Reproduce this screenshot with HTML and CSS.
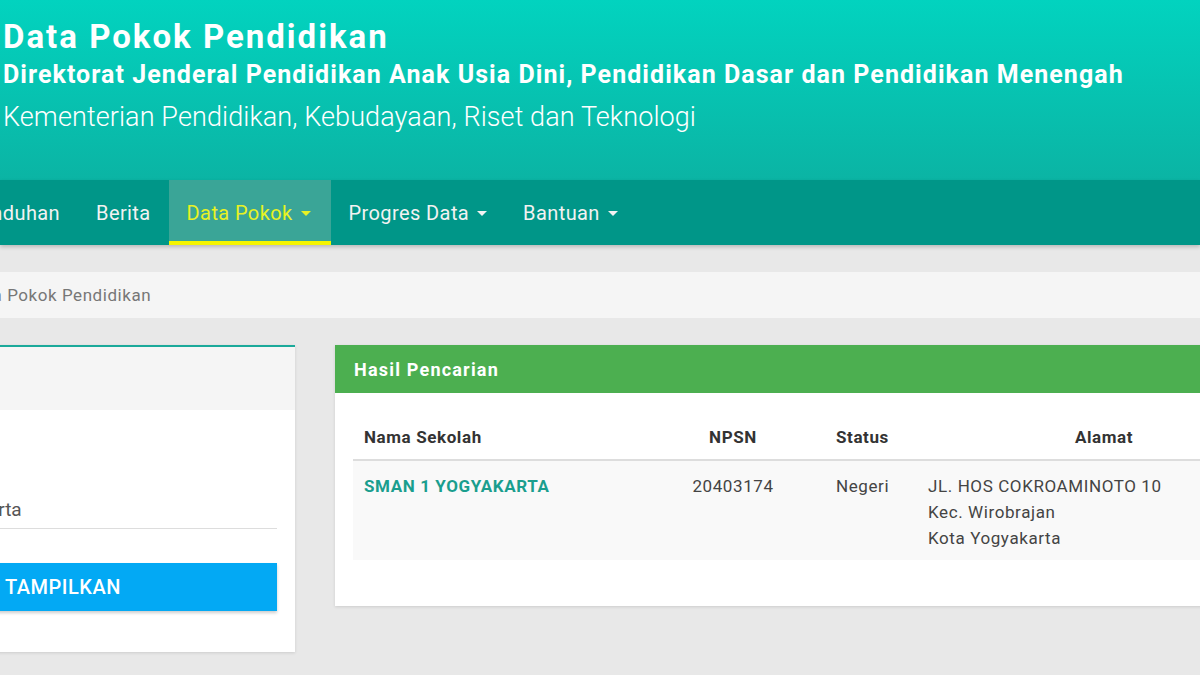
FILE: index.html
```html
<!DOCTYPE html>
<html lang="id">
<head>
    <meta charset="UTF-8">
    <meta name="viewport" content="width=device-width, initial-scale=1.0">
    <title>Data Pokok Pendidikan</title>
    <link rel="stylesheet" href="styles.css">
</head>
<body>
<header class="site-header">
    <h1>Data Pokok Pendidikan</h1>
    <div class="subtitle">Direktorat Jenderal Pendidikan Anak Usia Dini, Pendidikan Dasar dan Pendidikan Menengah</div>
    <div class="ministry">Kementerian Pendidikan, Kebudayaan, Riset dan Teknologi</div>
</header>

<nav class="main-nav">
    <ul>
        <li><a href="#">Unduhan</a></li>
        <li><a href="#">Berita</a></li>
        <li class="active"><a href="#">Data Pokok <span class="caret"></span></a></li>
        <li><a href="#">Progres Data <span class="caret"></span></a></li>
        <li><a href="#">Bantuan <span class="caret"></span></a></li>
    </ul>
</nav>

<div class="breadcrumb">
    <span>Data Pokok Pendidikan</span>
</div>

<main class="content">
    <section class="panel search-panel">
        <div class="panel-heading"></div>
        <div class="panel-body">
            <div class="form-group">
                <input type="text" value="Kota Yogyakarta">
            </div>
            <button type="button" class="btn-show">TAMPILKAN</button>
        </div>
    </section>

    <section class="panel result-panel">
        <div class="panel-heading">Hasil Pencarian</div>
        <div class="panel-body">
            <table class="result-table">
                <thead>
                    <tr>
                        <th class="col-name">Nama Sekolah</th>
                        <th class="col-npsn">NPSN</th>
                        <th class="col-status">Status</th>
                        <th class="col-address">Alamat</th>
                    </tr>
                </thead>
                <tbody>
                    <tr>
                        <td class="col-name"><a href="#">SMAN 1 YOGYAKARTA</a></td>
                        <td class="col-npsn">20403174</td>
                        <td class="col-status">Negeri</td>
                        <td class="col-address">JL. HOS COKROAMINOTO 10<br>Kec. Wirobrajan<br>Kota Yogyakarta</td>
                    </tr>
                </tbody>
            </table>
        </div>
    </section>
</main>
</body>
</html>
```
FILE: styles.css
```css
* {
    margin: 0;
    padding: 0;
    box-sizing: border-box;
}

body {
    font-family: Roboto, 'Liberation Sans', sans-serif;
    background: #e8e8e8;
    width: 1200px;
    height: 675px;
    overflow: hidden;
}

/* Шапка */
.site-header {
    height: 180px;
    background: linear-gradient(180deg, #02d3bf 0%, #0bb4a4 100%);
    color: white;
    padding: 17px 0 0 3px;
    white-space: nowrap;
}

.site-header h1 {
    font-size: 33px;
    font-weight: 700;
    line-height: 40px;
    letter-spacing: 2px;
}

.subtitle {
    font-size: 25px;
    font-weight: 700;
    line-height: 35px;
    letter-spacing: 1.05px;
}

.ministry {
    font-size: 27px;
    font-weight: 300;
    line-height: 50px;
    letter-spacing: 0.1px;
}

/* Меню */
.main-nav {
    background: #009688;
    height: 65px;
    box-shadow: 0 2px 4px rgba(0,0,0,0.2);
}

.main-nav ul {
    list-style: none;
    display: flex;
    height: 100%;
    margin-left: -40px;
}

.main-nav li {
    height: 100%;
}

.main-nav a {
    display: flex;
    align-items: center;
    gap: 8px;
    height: 100%;
    padding: 0 18px;
    color: #f2f2f2;
    text-decoration: none;
    font-size: 20px;
    letter-spacing: 0.4px;
}

.main-nav li.active a {
    background: #3aa597;
    color: #e8f224;
    border-bottom: 4px solid #f5f500;
    padding: 4px 20px 0 18px;
}

.caret {
    display: inline-block;
    border-left: 5px solid transparent;
    border-right: 5px solid transparent;
    border-top: 5px solid currentColor;
    margin-top: 2px;
}

/* Хлебные крошки */
.breadcrumb {
    margin-top: 27px;
    height: 46px;
    background: #f5f5f5;
    display: flex;
    align-items: center;
    font-size: 17px;
    letter-spacing: 0.55px;
    color: #777;
    overflow: hidden;
}

.breadcrumb span {
    margin-left: -35px;
}

/* Контент */
.content {
    display: flex;
    align-items: flex-start;
    gap: 40px;
    margin: 27px 0 0 -125px;
    width: 1433px;
}

.panel {
    background: white;
    box-shadow: 0 1px 3px rgba(0,0,0,0.12);
}

.search-panel {
    width: 420px;
    border-top: 2px solid #1ba99a;
    height: 307px;
}

.search-panel .panel-heading {
    height: 63px;
    background: #f5f5f5;
}

.search-panel .panel-body {
    padding: 82px 18px 0 8px;
}

.form-group input {
    width: 100%;
    border: none;
    border-bottom: 1px solid #ddd;
    padding: 6px 0 7px;
    font-family: inherit;
    font-size: 19px;
    color: #555;
    outline: none;
}

.btn-show {
    margin-top: 34px;
    width: 100%;
    height: 48px;
    background: #03a9f4;
    color: white;
    border: none;
    text-align: left;
    padding-left: 122px;
    font-family: inherit;
    font-size: 20px;
    font-weight: 500;
    letter-spacing: 0.5px;
    box-shadow: 0 2px 3px rgba(0,0,0,0.2);
}

.result-panel {
    flex: 1;
    height: 261px;
}

.result-panel .panel-heading {
    height: 48px;
    background: #4caf50;
    color: white;
    font-size: 18px;
    font-weight: 700;
    letter-spacing: 1.2px;
    display: flex;
    align-items: center;
    padding-left: 19px;
}

.result-panel .panel-body {
    padding: 22px 18px 0;
}

.result-table {
    width: 100%;
    border-collapse: collapse;
    font-size: 17px;
    letter-spacing: 0.6px;
    color: #444;
}

.result-table th {
    height: 45px;
    text-align: left;
    font-weight: 700;
    color: #333;
    border-bottom: 2px solid #ddd;
    padding: 0 11px;
}

.result-table td {
    background: #f9f9f9;
    vertical-align: top;
    padding: 12px 11px 9px;
    line-height: 26px;
}

.result-table .col-name {
    width: 287px;
}

.result-table .col-npsn {
    width: 186px;
    text-align: center;
}

.result-table .col-status {
    width: 92px;
    padding-left: 10px;
}

.result-table th.col-address {
    text-align: center;
}

.result-table td.col-address {
    padding-left: 10px;
}

.result-table a {
    color: #1a9e8e;
    font-weight: 700;
    text-decoration: none;
}
```
